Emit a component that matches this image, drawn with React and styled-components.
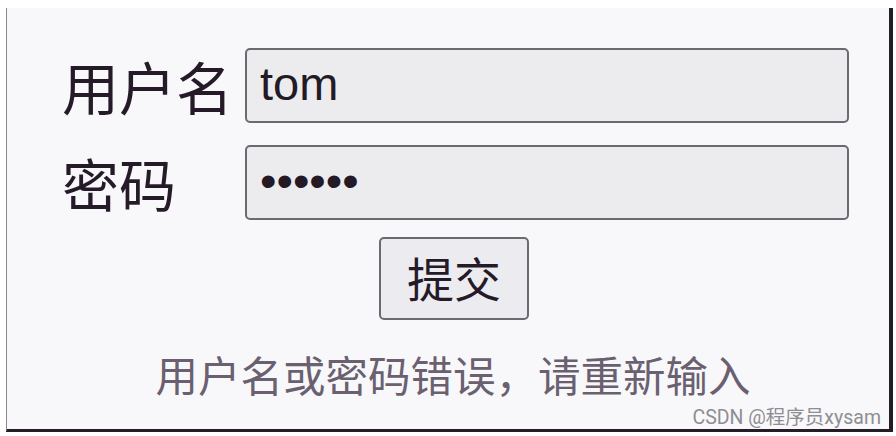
import React from "react";
import styled, { createGlobalStyle } from "styled-components";

const Global = createGlobalStyle`
  html, body {
    margin: 0;
    padding: 0;
    background: #ffffff;
  }
  body {
    font-family: "Noto Sans CJK SC", "Liberation Sans", sans-serif;
  }
`;

const Frame = styled.div`
  position: relative;
  box-sizing: border-box;
  margin: 8px 0 0 6px;
  width: 887px;
  height: 424px;
  background: #f8f8fb;
  border-left: 1.5px solid #8a8790;
  border-right: 4px solid #241d28;
  border-bottom: 3px solid #241d28;
  padding: 40px 40px 0 55px;
  display: flex;
  flex-direction: column;
`;

const Form = styled.form`
  display: grid;
  grid-template-columns: 183px 604px;
  row-gap: 22px;
  align-items: center;
`;

const Label = styled.label`
  font-family: "Noto Sans CJK SC", sans-serif;
  font-size: 57px;
  font-weight: 400;
  line-height: 1;
  color: #251b28;
`;

const Input = styled.input`
  box-sizing: border-box;
  width: 604px;
  height: 75px;
  margin: 0;
  padding: 0 0 4px 13px;
  background: #ececee;
  border: 2px solid #6c6a70;
  border-radius: 5px;
  font-family: "Liberation Sans", Arial, sans-serif;
  font-size: 47px;
  color: #231a26;
  outline: none;
`;

const Actions = styled.div`
  display: flex;
  justify-content: center;
  margin: 17px -40px 0 -43px;
`;

const Button = styled.button`
  box-sizing: border-box;
  width: 150px;
  height: 83px;
  padding: 0 0 4px;
  background: #ececf0;
  border: 2px solid #6c6a70;
  border-radius: 5px;
  font-family: "Noto Sans CJK SC", sans-serif;
  font-size: 47px;
  font-weight: 400;
  color: #251b28;
  cursor: pointer;
`;

const Message = styled.p`
  margin: 30px -40px 0 -45px;
  text-align: center;
  font-family: "Noto Sans CJK SC", sans-serif;
  font-size: 42.5px;
  line-height: 1.15;
  color: #6a6070;
`;

const Watermark = styled.span`
  position: absolute;
  right: 8px;
  bottom: 0;
  font-family: "Roboto", "Noto Sans CJK SC", sans-serif;
  font-size: 19.5px;
  line-height: 1.2;
  color: #8e8d92;
`;

export default function App() {
  return (
    <>
      <Global />
      <Frame>
        <Form onSubmit={(e) => e.preventDefault()}>
          <Label>用户名</Label>
          <Input type="text" defaultValue="tom" />
          <Label>密码</Label>
          <Input type="password" defaultValue="123456" />
        </Form>
        <Actions>
          <Button type="submit">提交</Button>
        </Actions>
        <Message>用户名或密码错误，请重新输入</Message>
        <Watermark>CSDN @程序员xysam</Watermark>
      </Frame>
    </>
  );
}
